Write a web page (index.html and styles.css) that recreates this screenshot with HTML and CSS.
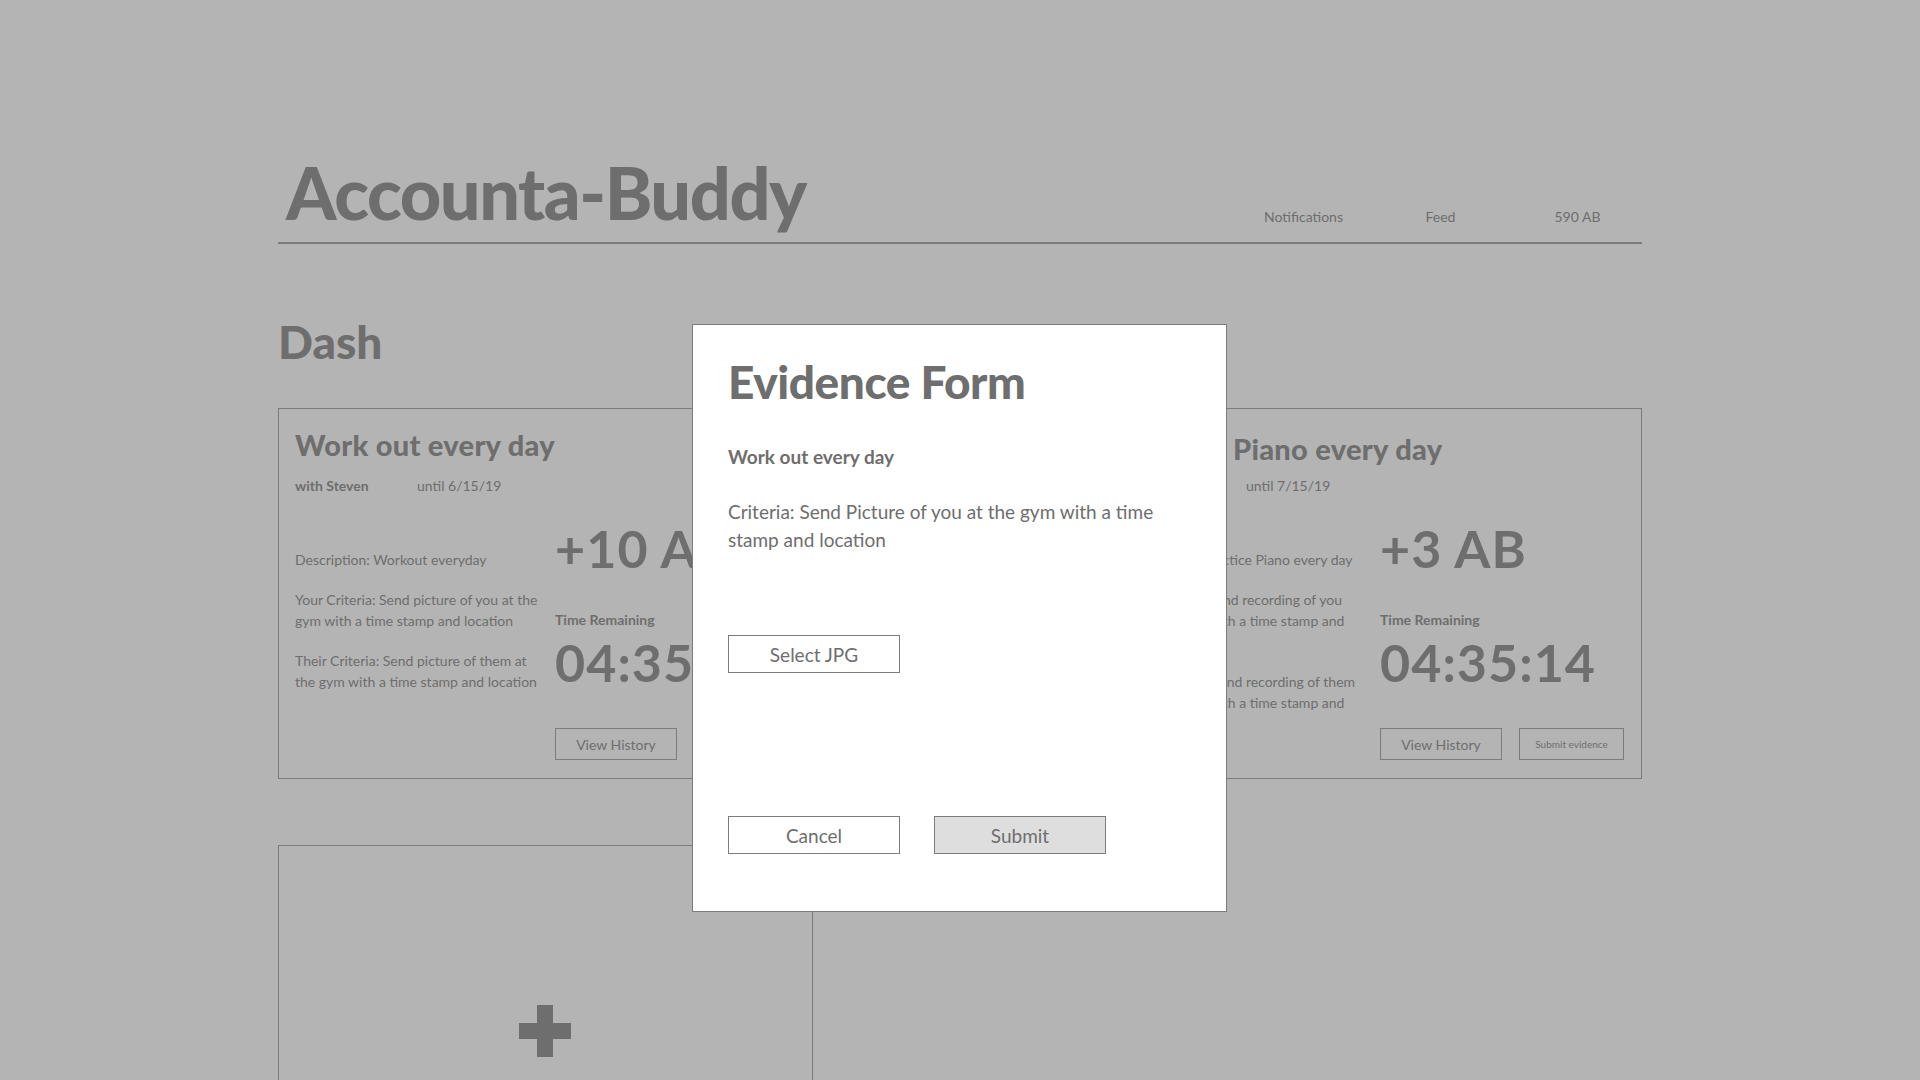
FILE: index.html
```html
<!DOCTYPE html>
<html lang="en">
<head>
    <meta charset="UTF-8">
    <meta name="viewport" content="width=device-width, initial-scale=1.0">
    <title>Accounta-Buddy</title>
    <link rel="stylesheet" href="styles.css">
</head>
<body>

    <div class="page">
        <div class="topbar">
            <h1 class="logo">Accounta-Buddy</h1>
            <div class="nav">
                <span>Notifications</span>
                <span>Feed</span>
                <span>590 AB</span>
            </div>
        </div>

        <h2 class="dash-title">Dash</h2>

        <div class="cards">
            <div class="card">
                <h3>Work out every day</h3>
                <div class="meta">
                    <span class="buddy">with Steven</span>
                    <span>until 6/15/19</span>
                </div>
                <div class="card-body">
                    <div class="details">
                        <p>Description: Workout everyday</p>
                        <p>Your Criteria: Send picture of you at the gym with a time stamp and location</p>
                        <p>Their Criteria: Send picture of them at the gym with a time stamp and location</p>
                    </div>
                    <div class="stats">
                        <div class="points">+10 AB</div>
                        <div class="label">Time Remaining</div>
                        <div class="timer">04:35:14</div>
                        <div class="actions">
                            <button class="btn">View History</button>
                        </div>
                    </div>
                </div>
            </div>

            <div class="card">
                <h3 class="lower">Practice Piano every day</h3>
                <div class="meta">
                    <span class="buddy">with Sarah</span>
                    <span>until 7/15/19</span>
                </div>
                <div class="card-body">
                    <div class="details">
                        <p>Description: Practice Piano every day</p>
                        <p>Your Criteria: Send recording of you<br>playing piano with a time stamp and<br>location</p>
                        <p>Their Criteria: Send recording of them<br>playing piano with a time stamp and<br>location</p>
                    </div>
                    <div class="stats">
                        <div class="points">+3 AB</div>
                        <div class="label">Time Remaining</div>
                        <div class="timer">04:35:14</div>
                        <div class="actions">
                            <button class="btn">View History</button>
                            <button class="btn btn-small">Submit evidence</button>
                        </div>
                    </div>
                </div>
            </div>

            <div class="card add-card">
                <div class="plus"></div>
            </div>
        </div>
    </div>

    <div class="modal">
        <h2>Evidence Form</h2>
        <div class="modal-goal">Work out every day</div>
        <p class="modal-criteria">Criteria: Send Picture of you at the gym with a time stamp and location</p>
        <button class="modal-btn select-btn">Select JPG</button>
        <div class="modal-actions">
            <button class="modal-btn">Cancel</button>
            <button class="modal-btn submit-btn">Submit</button>
        </div>
    </div>

</body>
</html>
```

FILE: styles.css
```css
body {
    margin: 0;
    padding: 0;
    font-family: Lato, "Open Sans", sans-serif;
    background-color: #b4b4b4; /* wireframe grey */
    color: #6e6e6e;
    height: 1080px;
    overflow: hidden;
    position: relative;
}

.page {
    width: 1364px;
    margin: 0 auto;
    padding-top: 156px;
}

/* header */
.topbar {
    display: flex;
    justify-content: space-between;
    align-items: flex-end;
    border-bottom: 2px solid #7c7c7c;
    padding: 0 0 14px 8px;
}

.logo {
    margin: 0;
    font-size: 72px;
    line-height: 1;
    font-weight: 900;
    letter-spacing: -0.02em;
}

.nav {
    display: flex;
    padding-bottom: 4px;
    margin-right: -4px;
}

.nav span {
    width: 137px;
    text-align: center;
    font-size: 14px;
    line-height: 1;
}

.dash-title {
    margin: 75px 0 43px 0;
    font-size: 46px;
    line-height: 1;
    font-weight: 900;
}

/* cards */
.cards {
    display: grid;
    grid-template-columns: 535px 535px;
    justify-content: space-between;
    row-gap: 66px;
}

.card {
    border: 1px solid #7c7c7c;
    height: 371px;
    box-sizing: border-box;
    padding: 21px 17px 18px 16px;
    display: flex;
    flex-direction: column;
}

.card h3 {
    margin: 0;
    font-size: 29px;
    line-height: 1;
    font-weight: 900;
    letter-spacing: 0.01em;
    white-space: nowrap;
}

.card h3.lower {
    margin: 4px 0 -4px -6px;
}

.meta {
    display: flex;
    margin-top: 20px;
    font-size: 14px;
    line-height: 1;
}

.meta .buddy {
    width: 122px;
    font-weight: 700;
}

.card-body {
    display: flex;
    margin-top: 29px;
    flex: 1;
}

.details {
    width: 250px;
    margin-right: 10px;
    padding-top: 27px;
    font-size: 14px;
    line-height: 21px;
}

.details p {
    margin: 0 0 19px 0;
}

.stats {
    display: flex;
    flex-direction: column;
}

.points,
.timer {
    font-size: 52px;
    line-height: 1;
    font-weight: 700;
    letter-spacing: 0.02em;
    white-space: nowrap;
}

.label {
    margin: 39px 0 9px 0;
    font-size: 14px;
    line-height: 1;
    font-weight: 700;
}

.actions {
    display: flex;
    gap: 17px;
    margin-top: auto;
}

.btn {
    width: 122px;
    height: 32px;
    border: 1px solid #7c7c7c;
    background: transparent;
    color: #6e6e6e;
    font-family: Lato, sans-serif;
    font-size: 14px;
    padding: 0;
}

.btn-small {
    width: 105px;
    font-size: 10px;
}

.add-card {
    height: 400px;
    align-items: center;
    padding-top: 159px;
}

.plus {
    position: relative;
    width: 52px;
    height: 52px;
}

.plus::before,
.plus::after {
    content: "";
    position: absolute;
    background-color: #6e6e6e;
}

.plus::before {
    left: 18px;
    top: 0;
    width: 16px;
    height: 52px;
}

.plus::after {
    left: 0;
    top: 18px;
    width: 52px;
    height: 16px;
}

/* evidence form popup */
.modal {
    position: absolute;
    top: 324px;
    left: 692px;
    width: 535px;
    height: 588px;
    box-sizing: border-box;
    background-color: #ffffff;
    border: 1px solid #7c7c7c;
    padding: 34px 36px 0 35px;
}

.modal h2 {
    margin: 0;
    font-size: 46px;
    line-height: 1;
    font-weight: 900;
    letter-spacing: -0.01em;
}

.modal-goal {
    margin-top: 42px;
    font-size: 19px;
    line-height: 1;
    font-weight: 700;
}

.modal-criteria {
    margin: 32px 0 0 0;
    font-size: 19px;
    line-height: 28px;
}

.modal-btn {
    display: block;
    width: 172px;
    height: 38px;
    border: 1px solid #7c7c7c;
    background: #ffffff;
    color: #6e6e6e;
    font-family: Lato, sans-serif;
    font-size: 19px;
    padding: 0;
}

.select-btn {
    margin-top: 81px;
}

.modal-actions {
    display: flex;
    gap: 34px;
    margin-top: 143px;
}

.submit-btn {
    background-color: #dedede;
}
```
